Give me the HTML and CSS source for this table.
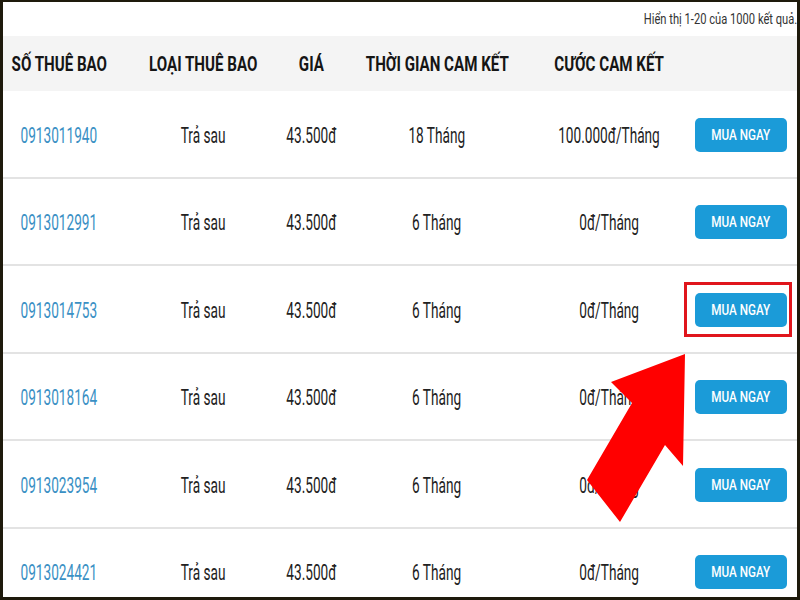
FILE: index.html
```html
<!DOCTYPE html>
<html lang="vi">
<head>
<meta charset="utf-8">
<title>Danh sách thuê bao</title>
<link rel="stylesheet" href="styles.css">
</head>
<body>
<div class="frame">
  <div class="info"><span class="info-text">Hiển thị 1-20 của 1000 kết quả.</span></div>
  <div class="table">
    <div class="row head">
      <div class="cell"><span class="h">SỐ THUÊ BAO</span></div>
      <div class="cell"><span class="h">LOẠI THUÊ BAO</span></div>
      <div class="cell"><span class="h">GIÁ</span></div>
      <div class="cell"><span class="h">THỜI GIAN CAM KẾT</span></div>
      <div class="cell"><span class="h">CƯỚC CAM KẾT</span></div>
      <div class="cell btn-cell"></div>
    </div>

    <div class="row">
      <div class="cell"><span class="t num">0913011940</span></div>
      <div class="cell"><span class="t">Trả sau</span></div>
      <div class="cell"><span class="t">43.500đ</span></div>
      <div class="cell"><span class="t">18 Tháng</span></div>
      <div class="cell"><span class="t">100.000đ/Tháng</span></div>
      <div class="cell btn-cell"><a class="btn"><span class="bt">MUA NGAY</span></a></div>
    </div>

    <div class="row">
      <div class="cell"><span class="t num">0913012991</span></div>
      <div class="cell"><span class="t">Trả sau</span></div>
      <div class="cell"><span class="t">43.500đ</span></div>
      <div class="cell"><span class="t">6 Tháng</span></div>
      <div class="cell"><span class="t">0đ/Tháng</span></div>
      <div class="cell btn-cell"><a class="btn"><span class="bt">MUA NGAY</span></a></div>
    </div>

    <div class="row">
      <div class="cell"><span class="t num">0913014753</span></div>
      <div class="cell"><span class="t">Trả sau</span></div>
      <div class="cell"><span class="t">43.500đ</span></div>
      <div class="cell"><span class="t">6 Tháng</span></div>
      <div class="cell"><span class="t">0đ/Tháng</span></div>
      <div class="cell btn-cell"><div class="mark"><a class="btn"><span class="bt">MUA NGAY</span></a><span class="highlight"></span></div></div>
    </div>

    <div class="row">
      <div class="cell"><span class="t num">0913018164</span></div>
      <div class="cell"><span class="t">Trả sau</span></div>
      <div class="cell"><span class="t">43.500đ</span></div>
      <div class="cell"><span class="t">6 Tháng</span></div>
      <div class="cell"><span class="t">0đ/Tháng</span></div>
      <div class="cell btn-cell"><a class="btn"><span class="bt">MUA NGAY</span></a></div>
    </div>

    <div class="row">
      <div class="cell"><span class="t num">0913023954</span></div>
      <div class="cell"><span class="t">Trả sau</span></div>
      <div class="cell"><span class="t">43.500đ</span></div>
      <div class="cell"><span class="t">6 Tháng</span></div>
      <div class="cell"><span class="t">0đ/Tháng</span></div>
      <div class="cell btn-cell"><a class="btn"><span class="bt">MUA NGAY</span></a></div>
    </div>

    <div class="row">
      <div class="cell"><span class="t num">0913024421</span></div>
      <div class="cell"><span class="t">Trả sau</span></div>
      <div class="cell"><span class="t">43.500đ</span></div>
      <div class="cell"><span class="t">6 Tháng</span></div>
      <div class="cell"><span class="t">0đ/Tháng</span></div>
      <div class="cell btn-cell"><a class="btn"><span class="bt">MUA NGAY</span></a></div>
    </div>
  </div>

  <svg class="arrow" width="800" height="600" viewBox="0 0 800 600" aria-hidden="true">
    <polygon points="685,354 683,466 665,445 620,522 587,480 632,403 611,382" fill="#ff0000"/>
  </svg>
</div>
</body>
</html>
```

FILE: styles.css
```css
* { box-sizing: border-box; }
html, body { margin: 0; padding: 0; }
body {
  width: 800px;
  height: 600px;
  overflow: hidden;
  background: #1e1a0c;
  font-family: Roboto, "Liberation Sans", Arial, sans-serif;
  color: #222;
}
.frame {
  position: relative;
  width: 800px;
  height: 600px;
  border-style: solid;
  border-color: #1e1a0c;
  border-width: 2px 3px 3px 3px;
  background: #fff;
  overflow: hidden;
}
.info {
  height: 34px;
  display: flex;
  align-items: center;
  justify-content: flex-end;
}
.info-text {
  display: inline-block;
  font-size: 15.5px;
  color: #333;
  white-space: nowrap;
  transform: scaleX(0.72);
  transform-origin: right center;
}
.table { display: flex; flex-direction: column; }
.row {
  display: grid;
  grid-template-columns: 112px 176px 40px 212px 132px 122px;
  height: 87.5px;
  border-bottom: 2px solid #e3e3e3;
}
.row.head {
  height: 55px;
  background: #f4f4f4;
  border-bottom: none;
}
.cell {
  display: flex;
  align-items: center;
  justify-content: center;
  min-width: 0;
  white-space: nowrap;
  padding-top: 3px;
}
.head .cell { padding-top: 1px; }
.h {
  display: inline-block;
  font-size: 21px;
  font-weight: 700;
  color: #151515;
  transform: scaleX(0.72);
}
.t {
  display: inline-block;
  font-size: 22px;
  color: #222;
  transform: scaleX(0.62);
}
.t.num { color: #3a90c4; }
.btn-cell { padding-left: 10px; padding-top: 2px; }
.btn {
  display: flex;
  align-items: center;
  justify-content: center;
  width: 92px;
  height: 34px;
  background: #1b9bd8;
  border-radius: 5px;
  color: #fff;
}
.bt {
  display: inline-block;
  font-size: 15px;
  font-weight: 500;
  transform: scaleX(0.78);
}
.mark { position: relative; }
.highlight {
  position: absolute;
  left: -11px;
  right: -5px;
  top: -11px;
  bottom: -10px;
  border: 3px solid #e0161c;
}
.arrow {
  position: absolute;
  left: -3px;
  top: -2px;
  pointer-events: none;
}
```
